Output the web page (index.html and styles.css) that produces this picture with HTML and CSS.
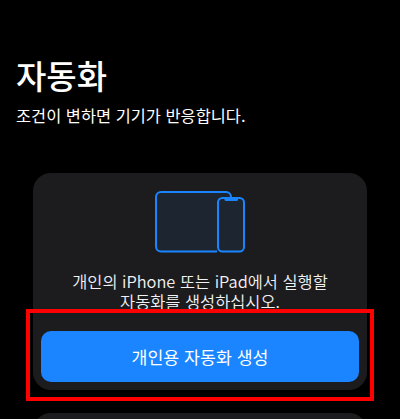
FILE: index.html
```html
<!DOCTYPE html>
<html lang="ko">
<head>
<meta charset="utf-8">
<title>자동화</title>
<link rel="stylesheet" href="styles.css">
</head>
<body>
<main class="page">
  <header class="intro">
    <h1 class="title">자동화</h1>
    <p class="subtitle">조건이 변하면 기기가 반응합니다.</p>
  </header>
  <section class="card">
    <svg class="devices" width="90" height="62" viewBox="0 0 90 62" aria-hidden="true">
      <rect x="1" y="1" width="75" height="59.5" rx="5" fill="#1c2530"/>
      <path d="M76 6.500V6a5 5 0 0 0-5-5H6a5 5 0 0 0-5 5v49.500a5 5 0 0 0 5 5h56" fill="none" stroke="#1a85ff" stroke-width="2"/>
      <rect x="63" y="7" width="26" height="53.500" rx="4.5" fill="#1c2530" stroke="#1a85ff" stroke-width="2"/>
      <path d="M69.500 7h13.500v1.500a1.500 1.500 0 0 1-1.500 1.500h-10.500a1.500 1.500 0 0 1-1.500-1.500z" fill="#1a85ff"/>
    </svg>
    <p class="message">개인의 iPhone 또는 iPad에서 실행할<br>자동화를 생성하십시오.</p>
    <button class="primary" type="button">개인용 자동화 생성</button>
  </section>
  <section class="card card-next"></section>
</main>
<div class="highlight"></div>
</body>
</html>
```
FILE: styles.css
```css
* { box-sizing: border-box; }
html, body { margin: 0; height: 100%; overflow: hidden; background: #000; }
body { font-family: "Noto Sans CJK KR", "Inter", sans-serif; color: #fff; position: relative; }
.page { height: 419px; overflow: hidden; padding: 55px 33px 0; }
.intro { margin: 0 -17px 48px; }
.title { margin: 0; font-size: 33px; line-height: 40px; font-weight: 500; }
.subtitle { margin: 0; padding-top: 10px; font-size: 16.4px; line-height: 20px; font-weight: 400; }
.card { background: #1c1c1e; border-radius: 18px; padding: 18px 8px 8px; display: flex; flex-direction: column; align-items: center; }
.devices { display: block; }
.message { margin: 18px 0 0; text-align: center; font-size: 16.4px; line-height: 20px; font-weight: 350; color: #f2f2f5; }
.primary { width: 100%; height: 51px; margin-top: 20px; border: 0; border-radius: 10px; background: #1a85ff; color: #fff; font: 400 17.300px "Noto Sans CJK KR", sans-serif; }
.card-next { margin-top: 23px; height: 60px; }
.highlight { position: absolute; left: 26px; top: 309px; width: 348px; height: 92px; border: 4px solid #f00; }
```
